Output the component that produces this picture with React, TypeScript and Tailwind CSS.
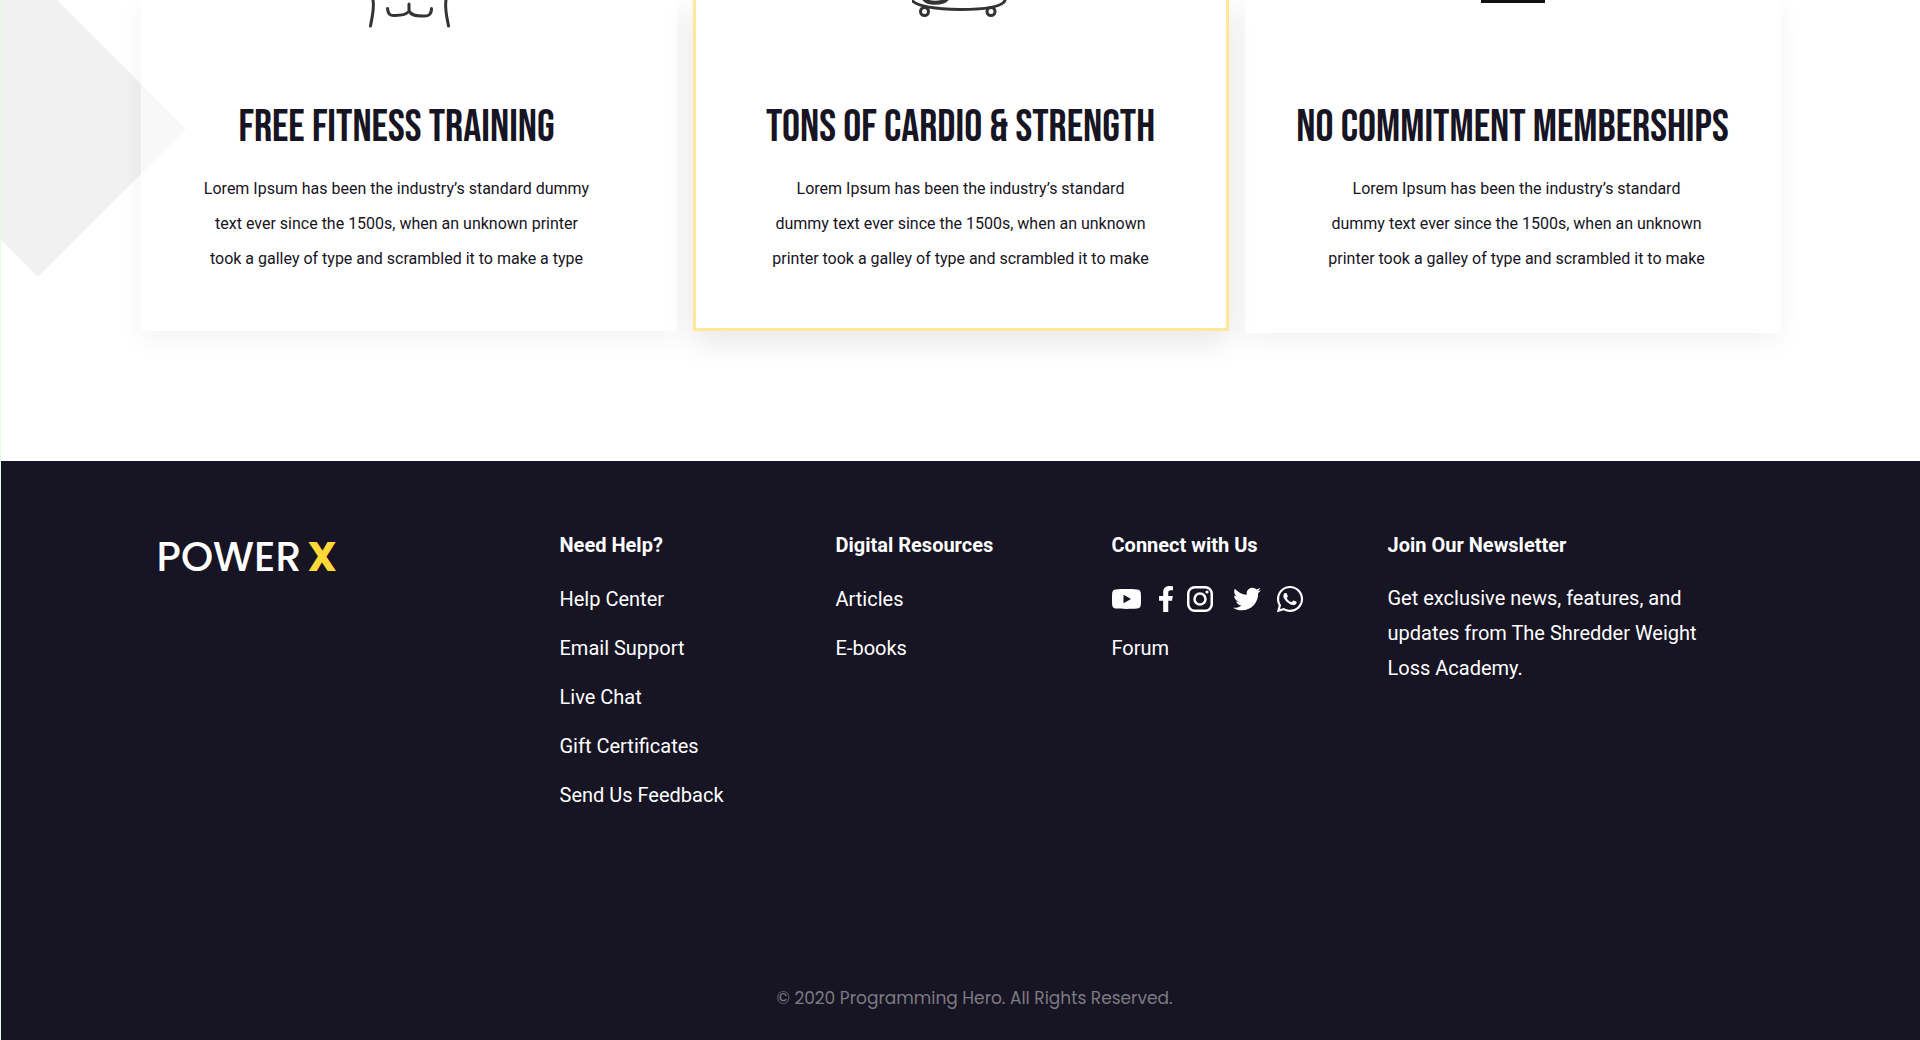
import React from "react";
import { FaFacebookF, FaTwitter, FaWhatsapp } from "react-icons/fa";

function TorsoIcon() {
  return (
    <svg width="82" height="28" viewBox="-1 0 82 28" fill="none" stroke="#333" strokeWidth="3" strokeLinecap="round" aria-hidden="true">
      <path d="M4 0C5.500 9 3 17 1.500 26" />
      <path d="M77 0C75.500 9 78 17 79.500 26" />
      <path d="M18.500 8.500C19 14 21 16 26 15.500C34 15.500 38 14 40 11V4M40 11C42 15 46 16 54 16C60 16.500 62.500 14 62.500 8.500" />
    </svg>
  );
}

function TreadmillIcon() {
  return (
    <svg width="98" height="17" viewBox="2 0 98 17" fill="none" stroke="#333" aria-hidden="true">
      <path d="M1 -1C4 5 20 9 50 9.500C70 9.500 94 8 95.500 -1" strokeWidth="3" />
      <path d="M14 -1C18 4 32 4 37 -1" strokeWidth="4" />
      <circle cx="14.500" cy="11.500" r="4" strokeWidth="3" fill="#fff" />
      <circle cx="81" cy="11.500" r="4" strokeWidth="3" fill="#fff" />
    </svg>
  );
}

function BlockIcon() {
  return (
    <svg width="64" height="4" viewBox="0 0 64 4" aria-hidden="true">
      <path d="M0 0H64V3H0Z" fill="#111" />
    </svg>
  );
}

function YoutubeIcon() {
  return (
    <svg width="29" height="20" viewBox="0 0 29 20" fill="#fff" fillRule="evenodd" aria-hidden="true">
      <path d="M4 .4C10 -.1 19 -.1 25 .4C27.500 .6 28.600 1.800 28.800 4C29.100 8 29.100 12 28.800 16C28.600 18.200 27.500 19.400 25 19.600C19 20.100 10 20.100 4 19.600C1.500 19.400 .4 18.200 .2 16C-.1 12 -.1 8 .2 4C.4 1.800 1.500 .6 4 .4ZM11.500 5.800V14.200L19 10Z" />
    </svg>
  );
}

function InstagramIcon() {
  return (
    <svg width="26" height="26" viewBox="0 0 26 26" fill="none" stroke="#fff" strokeWidth="2.500" aria-hidden="true">
      <rect x="1.250" y="1.250" width="23.500" height="23.500" rx="6.500" />
      <circle cx="13" cy="13" r="5.500" />
      <circle cx="20" cy="6" r="1.600" fill="#fff" stroke="none" />
    </svg>
  );
}

const cards = [
  {
    title: "FREE FITNESS TRAINING",
    lines: ["Lorem Ipsum has been the industry’s standard dummy", "text ever since the 1500s, when an unknown printer", "took a galley of type and scrambled it to make a type"],
    icon: <TorsoIcon />,
    frame: "pb-[55px] shadow-[0_8px_24px_rgba(0,0,0,0.05)]",
    copy: "pr-6",
    body: "",
  },
  {
    title: "TONS OF CARDIO & STRENGTH",
    lines: ["Lorem Ipsum has been the industry’s standard", "dummy text ever since the 1500s, when an unknown", "printer took a galley of type and scrambled it to make"],
    icon: <TreadmillIcon />,
    frame: "border-x-3 border-b-3 border-[#ffe79b] pb-[52px] shadow-[0_10px_30px_rgba(0,0,0,0.1)]",
    copy: "",
    body: "",
  },
  {
    title: "NO COMMITMENT MEMBERSHIPS",
    lines: ["Lorem Ipsum has been the industry’s standard", "dummy text ever since the 1500s, when an unknown", "printer took a galley of type and scrambled it to make"],
    icon: <BlockIcon />,
    frame: "pb-[57px] shadow-[0_8px_24px_rgba(0,0,0,0.05)]",
    copy: "",
    body: "pl-2",
  },
];

function LinkColumn({ title, links, children }: { title: string; links: string[]; children?: React.ReactNode }) {
  return (
    <nav aria-label={title}>
      <h2 className="text-[20px] leading-6 font-bold">{title}</h2>
      <ul className="mt-[30px] flex flex-col gap-[25px] text-[20px] leading-6">
        {children}
        {links.map((label) => (
          <li key={label}>
            <a href="#">{label}</a>
          </li>
        ))}
      </ul>
    </nav>
  );
}

export default function App() {
  return (
    <div className="relative isolate overflow-hidden border-l border-[#e4fde4] bg-white font-[Roboto,sans-serif] text-[#171424]">
      <svg className="absolute top-0 left-0 -z-10" width="186" height="278" viewBox="0 0 186 278" aria-hidden="true">
        <path d="M0 0H56L185 129L37 277L0 240Z" fill="#f1f1f1" />
      </svg>

      <main className="mx-auto grid max-w-[1640px] grid-cols-3 items-start gap-4">
        {cards.map((card) => (
          <article key={card.title} className={`flex flex-col items-center bg-white/50 text-center ${card.frame}`}>
            <div className="flex h-[100px] items-start">{card.icon}</div>
            <div className={card.copy}>
              <h2 className="font-['Bebas_Neue','Roboto_Condensed',sans-serif] text-[45px] leading-[55px] whitespace-nowrap">{card.title}</h2>
              <p className={`mt-4 text-[16px] leading-[35px] ${card.body}`}>
                {card.lines.map((line) => (
                  <span key={line} className="block whitespace-nowrap">{line}</span>
                ))}
              </p>
            </div>
          </article>
        ))}
      </main>

      <footer className="mt-32 bg-[#171424] px-4 text-white">
        <div className="mx-auto grid max-w-[1608px] grid-cols-[403fr_276fr_276fr_276fr_377fr] pt-[72px]">
          <a href="#" className="flex h-12 items-center gap-1.5 font-[Poppins,Inter,sans-serif] text-[41px] leading-12 font-medium">
            POWER <span className="font-bold text-[#ffd939]">X</span>
          </a>
          <LinkColumn title="Need Help?" links={["Help Center", "Email Support", "Live Chat", "Gift Certificates", "Send Us Feedback"]} />
          <LinkColumn title="Digital Resources" links={["Articles", "E-books"]} />
          <LinkColumn title="Connect with Us" links={["Forum"]}>
            <li className="flex h-6 items-center">
              <a href="#" aria-label="YouTube"><YoutubeIcon /></a>
              <a href="#" aria-label="Facebook" className="ml-3"><FaFacebookF size={26} /></a>
              <a href="#" aria-label="Instagram" className="ml-2"><InstagramIcon /></a>
              <a href="#" aria-label="Twitter" className="ml-5"><FaTwitter size={28} /></a>
              <a href="#" aria-label="WhatsApp" className="ml-3.5"><FaWhatsapp size={30} /></a>
            </li>
          </LinkColumn>
          <section>
            <h2 className="text-[20px] leading-6 font-bold">Join Our Newsletter</h2>
            <p className="mt-6 max-w-[340px] text-[20px] leading-[35px]">Get exclusive news, features, and updates from The Shredder Weight Loss Academy.</p>
          </section>
        </div>
        <p className="mt-[179px] pb-8 pl-7 text-center font-[Poppins,Inter,sans-serif] text-[17px] leading-6 text-[#7c7b82]">© 2020 Programming Hero. All Rights Reserved.</p>
      </footer>
    </div>
  );
}
